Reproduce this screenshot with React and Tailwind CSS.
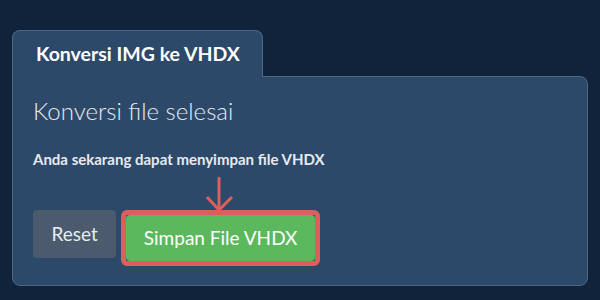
const font = { fontFamily: "Lato, 'Noto Sans', sans-serif" }

export default function App() {
  return (
    <div className="h-[300px] w-[600px] bg-[#10233a] px-3 pt-[30px] text-[#eef1f5]" style={font}>
      <div className="relative z-10 -mb-px flex h-[47px] w-[251px] items-center rounded-t-lg border border-b-0 border-[#4b6686] bg-[#2d4969] pl-[23px]">
        <span className="text-[19.5px] font-bold text-white">Konversi IMG ke VHDX</span>
      </div>
      <div className="h-[210px] rounded-b-lg rounded-tr-lg border border-[#4b6686] bg-[#2d4969] px-5 pt-[18px]">
        <h2 className="text-2xl font-light leading-8 text-[#e6eaf0]">Konversi file selesai</h2>
        <p className="mt-[22px] text-[15px] font-bold leading-5 text-[#e6eaf0]">
          Anda sekarang dapat menyimpan file VHDX
        </p>
        <div className="mt-[41px] flex items-start gap-[5px]">
          <button className="h-12 rounded bg-[#4b5b6d] px-[18.5px] text-[19px] text-[#e8ebef]">Reset</button>
          <div className="relative rounded-md border-[5px] border-[#db5f5a]">
            <svg className="absolute -top-[40px] left-[78px]" width="30" height="40" viewBox="0 0 30 40" fill="none">
              <path d="M15 2V37" stroke="#db5f5a" strokeWidth="3" />
              <path d="M3 22L15 35L28 22" stroke="#db5f5a" strokeWidth="3" />
            </svg>
            <button className="h-[46px] rounded-sm bg-[#5cb85c] px-[17.5px] text-[19px] text-white">Simpan File VHDX</button>
          </div>
        </div>
      </div>
    </div>
  )
}
